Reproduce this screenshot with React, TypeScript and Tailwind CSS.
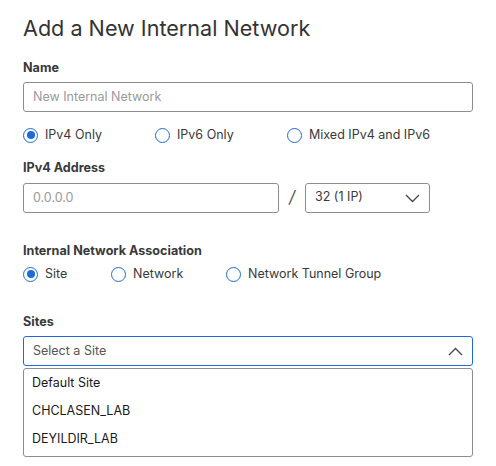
import React from "react";

const FONT = "font-['Inter','Liberation_Sans',sans-serif]";

function Radio({ label, checked }: { label: string; checked?: boolean }) {
  return (
    <label className="flex items-center gap-[7px] text-[12.5px] text-[#39393b]">
      <span className="w-[15px] h-[15px] rounded-full border-[1.5px] border-[#1e6bd6] flex items-center justify-center">
        {checked && <span className="w-[8px] h-[8px] rounded-full bg-[#1e6bd6]" />}
      </span>
      <span>{label}</span>
    </label>
  );
}

function Label({ children }: { children: React.ReactNode }) {
  return <div className="text-[12.6px] leading-4 font-bold text-[#39393b]">{children}</div>;
}

function Chevron({ up }: { up?: boolean }) {
  return (
    <svg width="15" height="9" viewBox="0 0 15 9" fill="none" stroke="#4a4a4a" strokeWidth="1.4">
      {up ? <path d="M1 8 L7.5 1.5 L14 8" /> : <path d="M1 1 L7.5 7.5 L14 1" />}
    </svg>
  );
}

export default function App() {
  return (
    <div className={`${FONT} bg-white w-[496px] h-[466px] px-[23px] pt-[14px]`}>
      <h1 className="text-[21.6px] leading-7 text-[#333336] font-normal">Add a New Internal Network</h1>

      <div className="mt-[18px]">
        <Label>Name</Label>
        <div className="mt-[6px] w-[450px] h-[30px] border border-[#8d8d8d] rounded-[3px] flex items-center px-[9px] text-[12.5px] text-[#9a9a9a]">
          New Internal Network
        </div>
      </div>

      <div className="mt-[13px] h-5 flex items-center">
        <div className="w-[132px]"><Radio label="IPv4 Only" checked /></div>
        <div className="w-[132px]"><Radio label="IPv6 Only" /></div>
        <Radio label="Mixed IPv4 and IPv6" />
      </div>

      <div className="mt-[15px]">
        <Label>IPv4 Address</Label>
        <div className="mt-[7px] flex items-center">
          <div className="w-[256px] h-[30px] border border-[#8d8d8d] rounded-[3px] flex items-center px-[9px] text-[12.5px] text-[#9a9a9a]">
            0.0.0.0
          </div>
          <span className="w-[26px] text-center text-[17px] text-[#555] italic">/</span>
          <div className="w-[125px] h-[30px] border border-[#8d8d8d] rounded-[3px] flex items-center justify-between pl-[9px] pr-[9px] text-[12.5px] text-[#39393b]">
            <span className="-mt-[2px]">32 (1 IP)</span>
            <Chevron />
          </div>
        </div>
      </div>

      <div className="mt-[30px]">
        <Label>Internal Network Association</Label>
        <div className="mt-[5px] h-5 flex items-center">
          <div className="w-[88px]"><Radio label="Site" checked /></div>
          <div className="w-[115px]"><Radio label="Network" /></div>
          <Radio label="Network Tunnel Group" />
        </div>
      </div>

      <div className="mt-[30px]">
        <Label>Sites</Label>
        <div className="mt-[6px] w-[450px] h-[30px] border border-[#1e6bd6] rounded-[3px] flex items-center justify-between pl-[9px] pr-[9px] text-[12.5px] text-[#555]">
          <span>Select a Site</span>
          <Chevron up />
        </div>
        <div className="mt-[2px] w-[450px] border border-[#8d8d8d] rounded-[3px] pb-[3px] text-[12.5px] text-[#1a1a1a]">
          {["Default Site", "CHCLASEN_LAB", "DEYILDIR_LAB"].map((s) => (
            <div key={s} className="h-7 leading-7 px-[8px]">{s}</div>
          ))}
        </div>
      </div>
    </div>
  );
}
